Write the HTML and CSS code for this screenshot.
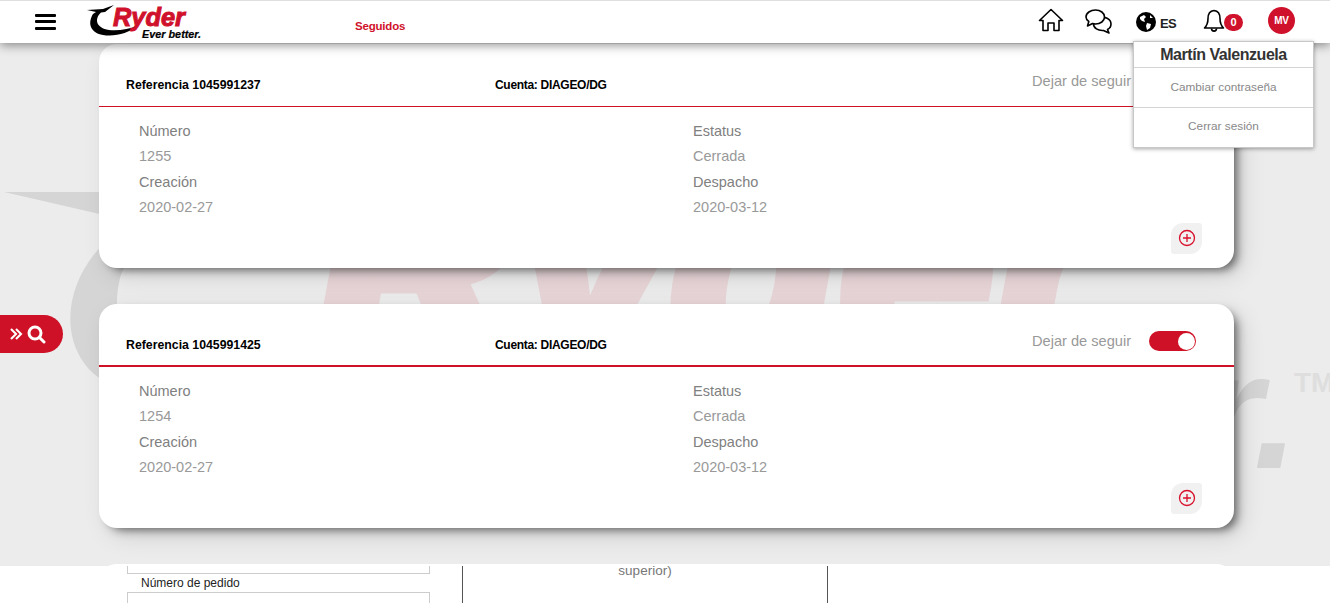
FILE: index.html
```html
<!DOCTYPE html>
<html lang="es">
<head>
<meta charset="utf-8">
<title>Seguidos</title>
<link rel="stylesheet" href="styles.css">
</head>
<body>
<header class="topbar">
  <button class="burger" aria-label="Menú"><span></span><span></span><span></span></button>
  <svg class="logo" width="118" height="40" viewBox="0 0 118 40">
    <path class="logo-black" d="M0 8 L16 7 L27 3 L18 10 L14 10.500 C7 17 9 26 22 28 C32 29 42 27 50 24 C42 31 28 35 16 33 C4 31 0 22 6 12 L9 10 Z"/>
    <text class="logo-ryder" x="26" y="24" textLength="72" lengthAdjust="spacingAndGlyphs">Ryder</text>
    <text class="logo-ever" x="55" y="36" textLength="59" lengthAdjust="spacingAndGlyphs">Ever better.</text>
  </svg>
  <a class="nav-link">Seguidos</a>
  <div class="tools">
    <svg class="tool-home" width="26" height="24" viewBox="0 0 26 24"><path class="line" d="M1.500 12.500 L13 1.500 L24.500 12.500 H21 V22.500 H16 V15 H10 V22.500 H5 V12.500 Z"/></svg>
    <svg class="tool-chat" width="27" height="25" viewBox="0 0 27 25"><path class="line-w" d="M13 9.500 C20 6.500 26 10 26 15 C26 17.500 24.500 19.500 22.500 20.500 L24 24 L18.500 21.500 C13 22 8.500 19 8.500 15 Z"/><path class="line-w" d="M10.500 1 C15.500 1 19.500 4 19.500 8 C19.500 12 15.500 15 10.500 15 C9.500 15 8.500 14.900 7.500 14.500 L2.500 17 L3.800 12.500 C2 11.300 1 9.800 1 8 C1 4 5.500 1 10.500 1 Z"/></svg>
    <div class="lang">
      <svg width="20" height="20" viewBox="0 0 20 20"><circle cx="10" cy="10" r="10" fill="#000"/><path fill="#fff" d="M4 5 L8 3 L10 5 L8 7 L9 10 L6 9 L4 7 Z M11 11 L15 12 L14 16 L11 18 L10 14 Z M14 3 L17 6 L14 6 Z"/></svg>
      <span>ES</span>
    </div>
    <div class="alerts">
      <svg width="22" height="24" viewBox="0 0 22 24"><path class="line" d="M11 1.500 C6.500 2 5 5.500 5 9.500 C5 14 4 16.500 1.500 19 H20.500 C18 16.500 17 14 17 9.500 C17 5.500 15.500 2 11 1.500 Z"/><path class="line" d="M8.500 19.500 C8.500 23 13.500 23 13.500 19.500"/></svg>
      <span class="badge">0</span>
    </div>
    <div class="avatar">MV</div>
  </div>
  <aside class="user-menu">
    <div class="user-name">Martín Valenzuela</div>
    <a class="user-item">Cambiar contraseña</a>
    <a class="user-item">Cerrar sesión</a>
  </aside>
</header>

<main class="stage">
  <svg class="watermark" width="1330" height="523" viewBox="0 0 1330 523">
    <path class="wm-grey" d="M4 149 H130 V178 Z"/>
    <path class="wm-grey" d="M110 195 C74 225 56 280 84 320 C95 336 115 345 135 350 L140 300 C120 290 112 270 120 235 C124 222 130 215 140 208 Z"/>
    <text class="wm-ryder" x="316" y="318" textLength="785" lengthAdjust="spacingAndGlyphs">Ryder</text>
    <text class="wm-ever" x="1299" y="425" text-anchor="end">r.</text>
    <text class="wm-tm" x="1294" y="349">TM</text>
  </svg>
  <button class="search-tab" aria-label="Buscar">
    <svg width="38" height="20" viewBox="0 0 38 20"><path class="chev" d="M1 5 L6 10 L1 15 M6 5 L11 10 L6 15"/><circle class="glass" cx="25" cy="9" r="6"/><path class="glass" d="M29.500 13.500 L34 18"/></svg>
  </button>

  <article class="card">
    <div class="card-head">
      <strong class="ref">Referencia 1045991237</strong>
      <strong class="ref ref-acct">Cuenta: DIAGEO/DG</strong>
      <span class="follow">Dejar de seguir</span>
      <span class="toggle"></span>
    </div>
    <dl class="fields">
      <div class="field"><dt>Número</dt><dd>1255</dd><dt>Creación</dt><dd>2020-02-27</dd></div>
      <div class="field"><dt>Estatus</dt><dd>Cerrada</dd><dt>Despacho</dt><dd>2020-03-12</dd></div>
    </dl>
    <div class="card-foot"><button class="more" aria-label="Más"><svg width="18" height="18" viewBox="0 0 18 18"><circle class="plus" cx="9" cy="9" r="7.500"/><path class="plus" d="M9 5 V13 M5 9 H13"/></svg></button></div>
  </article>

  <article class="card">
    <div class="card-head card-head-thick">
      <strong class="ref">Referencia 1045991425</strong>
      <strong class="ref ref-acct">Cuenta: DIAGEO/DG</strong>
      <span class="follow">Dejar de seguir</span>
      <span class="toggle"></span>
    </div>
    <dl class="fields">
      <div class="field"><dt>Número</dt><dd>1254</dd><dt>Creación</dt><dd>2020-02-27</dd></div>
      <div class="field"><dt>Estatus</dt><dd>Cerrada</dd><dt>Despacho</dt><dd>2020-03-12</dd></div>
    </dl>
    <div class="card-foot"><button class="more" aria-label="Más"><svg width="18" height="18" viewBox="0 0 18 18"><circle class="plus" cx="9" cy="9" r="7.500"/><path class="plus" d="M9 5 V13 M5 9 H13"/></svg></button></div>
  </article>

  <div class="card card-next"></div>
</main>

<section class="leak">
  <div class="leak-form">
    <div class="box box-end"></div>
    <label class="leak-label">Número de pedido</label>
    <div class="box box-start"></div>
  </div>
  <div class="leak-cell">superior)</div>
</section>
</body>
</html>
```
FILE: styles.css
```css
* { box-sizing: border-box; }
html, body { margin: 0; padding: 0; height: 603px; overflow: hidden; background: #fff; font-family: "Liberation Sans", Arial, sans-serif; }
button { border: 0; padding: 0; background: none; font: inherit; }

.topbar { position: relative; z-index: 5; height: 43px; background: #fff; border-top: 1px solid #dfdfdf; box-shadow: 0 2px 10px rgba(0,0,0,.45); display: flex; align-items: center; }
.burger { margin-left: 35px; width: 21px; height: 16px; display: flex; flex-direction: column; justify-content: space-between; margin-top: -1px; }
.burger span { display: block; height: 3px; background: #000; border-radius: 1px; }
.logo { margin-left: 31px; flex: none; }
.logo-black { fill: #000; }
.logo-ryder { font: italic 700 26px "Liberation Sans", Arial, sans-serif; fill: #d0112b; stroke: #d0112b; stroke-width: 1px; }
.logo-ever { font: italic 700 11px "Liberation Sans", Arial, sans-serif; fill: #000; stroke: #000; stroke-width: .2px; }
.nav-link { margin-left: 150px; margin-top: 8px; color: #d0112b; font-size: 11.500px; font-weight: 700; letter-spacing: -.2px; }
.tools { margin-left: auto; margin-right: 35px; display: flex; align-items: center; }
.line { fill: none; stroke: #000; stroke-width: 1.6; stroke-linejoin: round; }
.line-w { fill: #fff; stroke: #000; stroke-width: 1.6; stroke-linejoin: round; }
.tool-home { display: block; margin-top: -4px; }
.tool-chat { display: block; margin-left: 21px; margin-top: -2px; }
.lang { display: flex; align-items: center; gap: 4px; margin-left: 24px; margin-top: -1px; }
.lang svg { display: block; }
.lang span { width: 15px; font-size: 13px; font-weight: 700; color: #222; margin-top: 3px; letter-spacing: -.6px; }
.alerts { display: flex; align-items: center; margin-left: 28px; margin-top: -3px; }
.alerts svg { display: block; }
.badge { width: 19px; height: 17px; margin-left: -1px; margin-top: 3px; border-radius: 9px; background: #d0112b; color: #fff; font-size: 11px; font-weight: 700; display: flex; align-items: center; justify-content: center; }
.avatar { width: 27px; height: 27px; margin-left: 25px; margin-top: -3px; border-radius: 50%; background: #d0112b; color: #fff; font-size: 10px; font-weight: 700; letter-spacing: -.3px; display: flex; align-items: center; justify-content: center; }

.user-menu { position: absolute; left: 1133px; top: 40px; width: 181px; height: 107px; background: #fff; border: 1px solid #c8c8c8; box-shadow: 0 1px 4px rgba(0,0,0,.35); display: flex; flex-direction: column; text-align: center; }
.user-name { height: 26px; line-height: 26px; font-size: 16px; font-weight: 700; color: #333; border-bottom: 1px solid #d4d4d4; letter-spacing: -.45px; }
.user-item { height: 40px; line-height: 38px; font-size: 11.800px; color: #888; border-bottom: 1px solid #d4d4d4; }
.user-item:last-child { border-bottom: 0; line-height: 36px; }

.stage { position: relative; height: 523px; background: #ececec; overflow: hidden; padding: 1px 96px 0 99px; display: flex; flex-direction: column; gap: 36px; }
.watermark { position: absolute; left: 0; top: 0; }
.wm-grey { fill: #d5d5d5; }
.wm-ryder { font: italic 700 290px "Liberation Sans", Arial, sans-serif; fill: #e8d5d8; stroke: #e8d5d8; stroke-width: 16px; }
.wm-ever { font: italic 700 165px "Liberation Sans", Arial, sans-serif; fill: #d5d5d5; }
.wm-tm { font: 700 28px "Liberation Sans", Arial, sans-serif; fill: #dedede; }
.search-tab { position: absolute; left: 0; top: 272px; width: 63px; height: 38px; background: #ce1126; border-radius: 0 19px 19px 0; display: flex; align-items: center; padding-left: 10px; }
.search-tab svg { display: block; }
.chev { fill: none; stroke: #fff; stroke-width: 2.100; }
.glass { fill: none; stroke: #fff; stroke-width: 3; stroke-linecap: round; }

.card { position: relative; flex: none; height: 224px; background: #fff; border-radius: 18px; box-shadow: 6px 5px 10px -3px rgba(0,0,0,.55), 8px 8px 24px rgba(0,0,0,.12); display: flex; flex-direction: column; }
.card-next { height: 60px; box-shadow: none; }
.card-head { height: 63px; flex: none; padding: 0 38px 0 27px; border-bottom: 1px solid #ce1126; display: flex; align-items: center; }
.card-head-thick { border-bottom-width: 2px; }
.ref { width: 369px; font-size: 12.300px; color: #000; padding-top: 20px; }
.ref-acct { width: auto; font-size: 12px; letter-spacing: -.3px; }
.follow { margin-left: auto; font-size: 14.600px; color: #999; padding-top: 12px; }
.toggle { position: relative; width: 47px; height: 20px; margin-left: 18px; margin-top: 13px; background: #ce1126; border-radius: 10px; }
.toggle::after { content: ""; position: absolute; right: 1px; top: 1.500px; width: 17px; height: 17px; background: #fff; border-radius: 50%; }

.fields { margin: 0; padding: 11.600px 0 0 40px; display: grid; grid-template-columns: 554px 1fr; }
.field { display: grid; grid-auto-rows: 25.500px; }
.field dt, .field dd { margin: 0; line-height: 25.500px; font-size: 14.500px; }
.field dt { color: #808080; }
.field dd { color: #999; }
.card-foot { display: flex; justify-content: flex-end; padding: 2.400px 32px 0 0; }
.more { width: 31px; height: 31px; background: #f1f1f1; border-radius: 12px 3px 12px 3px; display: flex; align-items: center; justify-content: center; }
.more svg { display: block; }
.plus { fill: none; stroke: #d9102c; stroke-width: 1.300; }

.leak { display: flex; height: 37px; padding-left: 127px; font-size: 12px; color: #222; overflow: hidden; }
.leak-form { width: 303px; flex: none; }
.box { height: 8px; border: 1px solid #ccc; }
.box-end { border-top: 0; }
.box-start { height: 20px; border-bottom: 0; }
.leak-label { display: block; height: 18px; line-height: 18px; padding-left: 14px; }
.leak-cell { width: 366px; margin-left: 32px; border-left: 1px solid #555; border-right: 1px solid #555; text-align: center; font-size: 13.500px; color: #777; line-height: 10px; }
```
